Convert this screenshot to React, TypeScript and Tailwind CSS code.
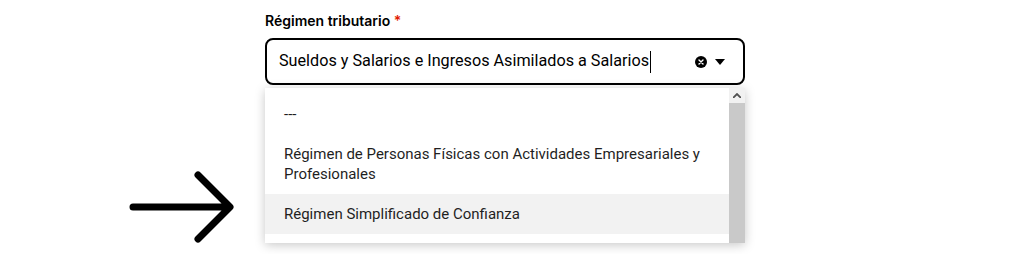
import React from 'react';

const options = [
  '---',
  'Régimen de Personas Físicas con Actividades Empresariales y Profesionales',
  'Régimen Simplificado de Confianza',
];

const ClearIcon = () => (
  <svg width="12" height="12" viewBox="0 0 12 12">
    <circle cx="6" cy="6" r="6" fill="#000" />
    <path d="M4 4l4 4M8 4l-4 4" stroke="#fff" strokeWidth="1.4" strokeLinecap="round" />
  </svg>
);

const CaretIcon = () => (
  <svg width="10" height="6" viewBox="0 0 10 6">
    <path d="M0 0h10L5 6z" fill="#000" />
  </svg>
);

const Arrow = () => (
  <svg width="112" height="74" viewBox="0 0 112 74" fill="none">
    <path
      d="M6 37h96M71 5l32 32-32 32"
      stroke="#000"
      strokeWidth="7"
      strokeLinecap="round"
      strokeLinejoin="round"
    />
  </svg>
);

export default function App() {
  return (
    <div className="w-[1024px] h-[254px] bg-white overflow-hidden relative font-['Roboto',sans-serif]">
      {/* pointer */}
      <div className="absolute left-[127px] top-[170px]">
        <Arrow />
      </div>

      <div className="ml-[265px] w-[480px] pt-[12px]">
        <label className="block text-[14px] leading-[18px] font-semibold text-black font-['Inter',sans-serif]">
          Régimen tributario <span className="text-[#e11900]">*</span>
        </label>

        <div className="mt-[8px] h-[47px] border-2 border-black rounded-[8px] flex items-center pl-[12px] pr-[18px]">
          <span className="text-[16.2px] text-black leading-none">
            Sueldos y Salarios e Ingresos Asimilados a Salarios
          </span>
          <span className="w-px h-[22px] bg-black ml-[1px]" />
          <div className="ml-auto flex items-center gap-[8px]">
            <ClearIcon />
            <CaretIcon />
          </div>
        </div>

        {/* dropdown */}
        <div className="mt-[3px] h-[155px] overflow-hidden bg-white flex shadow-[0_2px_10px_rgba(0,0,0,0.22)]">
          <ul className="flex-1 pt-[6px] text-[15px] leading-[20px] text-[#1f1f1f]">
            {options.map((o, i) => (
              <li
                key={o}
                className={`pl-[19px] pr-[24px] py-[10px] ${i === 2 ? 'bg-[#f2f2f2]' : ''}`}
              >
                {o}
              </li>
            ))}
          </ul>
          <div className="w-[16px] flex flex-col bg-[#f1f1f1]">
            <div className="h-[15px] flex items-center justify-center">
              <svg width="8" height="5" viewBox="0 0 8 5">
                <path d="M0 5L4 1l4 4" stroke="#505050" strokeWidth="1.8" fill="none" />
              </svg>
            </div>
            <div className="flex-1 bg-[#c9c9c9]" />
          </div>
        </div>
      </div>
    </div>
  );
}
